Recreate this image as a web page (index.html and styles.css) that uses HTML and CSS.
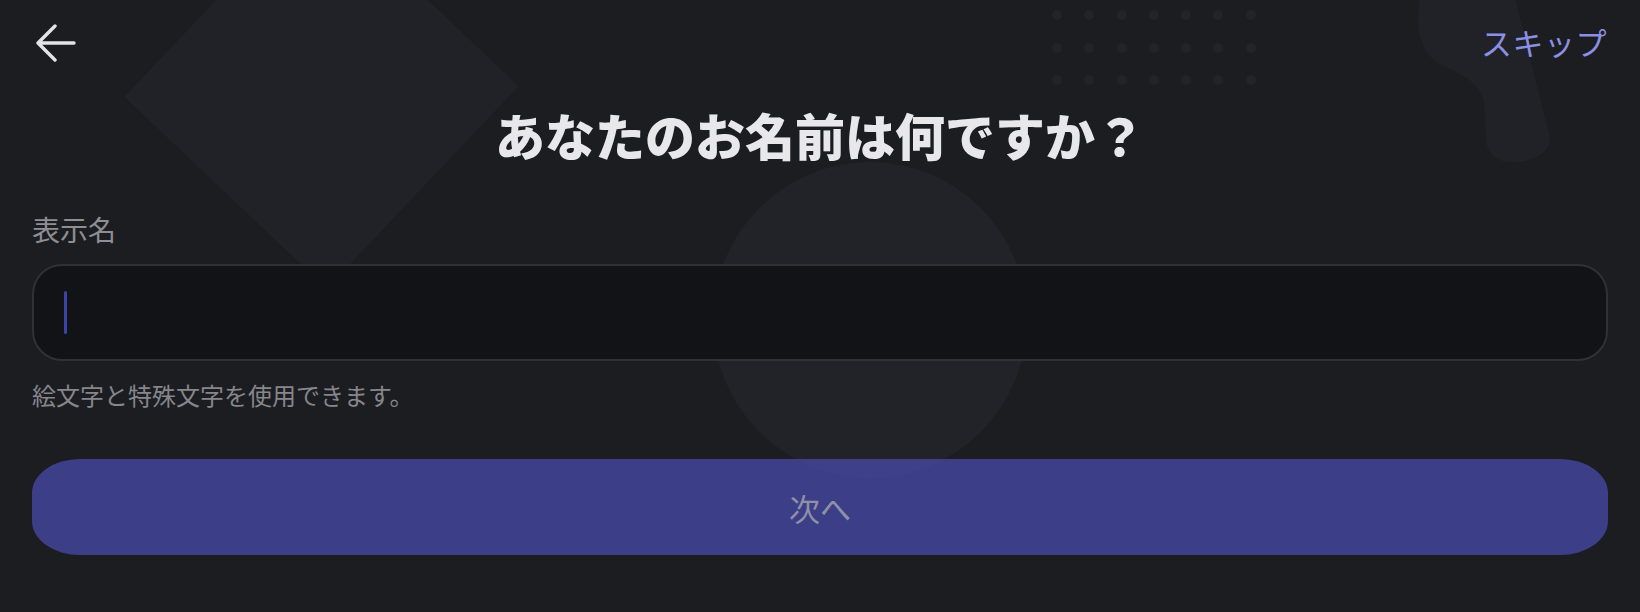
FILE: index.html
```html
<!DOCTYPE html>
<html lang="ja">
<head>
    <meta charset="UTF-8">
    <meta name="viewport" content="width=device-width, initial-scale=1.0">
    <title>表示名</title>
    <link rel="stylesheet" href="styles.css">
</head>
<body>

<div class="screen">
    <!-- background decoration -->
    <div class="deco deco-diamond"></div>
    <div class="deco deco-circle"></div>
    <div class="deco deco-dots">
        <span></span><span></span><span></span><span></span><span></span><span></span><span></span>
        <span></span><span></span><span></span><span></span><span></span><span></span><span></span>
        <span></span><span></span><span></span><span></span><span></span><span></span><span></span>
    </div>
    <svg class="deco deco-blob" width="160" height="180" viewBox="1400 0 160 180">
        <path d="M1422,-10 C1414,22 1418,52 1440,64 C1462,76 1485,82 1485,112 L1486,140 C1488,158 1502,164 1518,162 C1538,160 1553,150 1549,134 L1513,-10 Z" fill="#212227"/>
    </svg>

    <header class="topbar">
        <button class="back-btn" aria-label="戻る">
            <svg width="40" height="40" viewBox="0 0 40 40" fill="none" stroke="#e4e4e7" stroke-width="3.4" stroke-linecap="round" stroke-linejoin="round">
                <path d="M38 20 H2 M19 3 L2 20 L19 37"/>
            </svg>
        </button>
        <a class="skip" href="#">スキップ</a>
    </header>

    <h1 class="title">あなたのお名前は何ですか？</h1>

    <form class="name-form">
        <label class="field-label">表示名</label>
        <div class="field">
            <span class="caret"></span>
        </div>
        <p class="hint">絵文字と特殊文字を使用できます。</p>
        <button type="button" class="next-btn">次へ</button>
    </form>
</div>

</body>
</html>
```

FILE: styles.css
```css
body {
    margin: 0;
    padding: 0;
    background: #1c1d21;
    font-family: 'Noto Sans CJK JP', 'Noto Sans', sans-serif;
    color: #e8e8ea;
}

.screen {
    position: relative;
    width: 1640px;
    height: 612px;
    overflow: hidden;
    padding: 0 32px;
    box-sizing: border-box;
}

/* decoration behind the content */
.deco {
    position: absolute;
    pointer-events: none;
}

.deco-diamond {
    left: 182px;
    top: -48px;
    width: 279px;
    height: 279px;
    background: #212227;
    transform: rotate(43.5deg);
}

.deco-circle {
    left: 713px;
    top: 162px;
    width: 314px;
    height: 316px;
    border-radius: 50%;
    background: #222328;
}

.deco-dots {
    left: 1052px;
    top: 10px;
    display: grid;
    grid-template-columns: repeat(7, 10px);
    column-gap: 22.3px;
    row-gap: 22.5px;
}

.deco-dots span {
    width: 10px;
    height: 10px;
    border-radius: 50%;
    background: #23242a;
}

.deco-blob {
    left: 1400px;
    top: 0;
}

.topbar {
    position: relative;
    display: flex;
    justify-content: space-between;
    align-items: center;
    height: 82px;
}

.back-btn {
    background: none;
    border: none;
    padding: 0;
    margin: 4px 0 0 4px;
    width: 40px;
    height: 40px;
    cursor: pointer;
}

.back-btn svg {
    display: block;
}

.skip {
    font-size: 31px;
    color: #8b90e4;
    text-decoration: none;
    letter-spacing: 0.5px;
    margin-right: 1px;
}

.title {
    position: relative;
    margin: 22px 0 0;
    font-size: 50px;
    line-height: 60px;
    font-weight: 900;
    text-align: center;
    color: #e8e8ea;
}

.name-form {
    position: relative;
    margin-top: 47px;
    display: flex;
    flex-direction: column;
}

.field-label {
    font-size: 28px;
    line-height: 36px;
    color: #8e8e95;
}

.field {
    margin-top: 17px;
    height: 97px;
    box-sizing: border-box;
    border: 2px solid #303137;
    border-radius: 30px;
    background: #121317;
    display: flex;
    align-items: center;
    padding-left: 30px;
}

.caret {
    width: 3px;
    height: 43px;
    border-radius: 2px;
    background: #3b44a6;
}

.hint {
    margin: 19px 0 0;
    font-size: 24px;
    line-height: 30px;
    color: #86868c;
}

.next-btn {
    margin-top: 49px;
    height: 96px;
    border: none;
    border-radius: 48px / 34px;
    background: rgba(74, 78, 179, 0.7);
    color: #8f8fa8;
    font-family: inherit;
    font-size: 31px;
    cursor: pointer;
}
```
